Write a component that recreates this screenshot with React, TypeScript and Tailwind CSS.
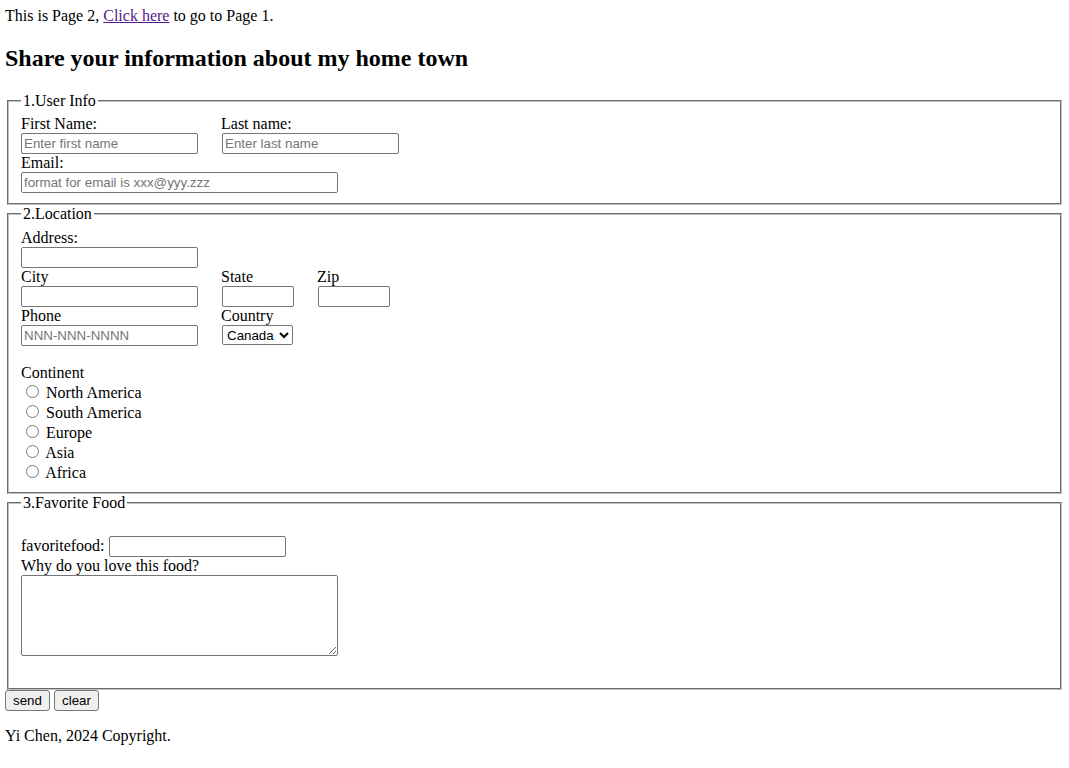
export default function App() {
  const inputCls =
    "block h-[21px] rounded-[2px] border border-[#767676] bg-white px-[2px] py-[1px] font-['Liberation_Sans',Arial,sans-serif] text-[13.333px] leading-[normal] text-black placeholder:text-[#757575] outline-none";
  const inlineInputCls =
    "inline-block h-[21px] rounded-[2px] border border-[#767676] bg-white px-[2px] py-[1px] font-['Liberation_Sans',Arial,sans-serif] text-[13.333px] leading-[normal] text-black placeholder:text-[#757575] outline-none";
  const fieldsetCls =
    "mx-[2px] min-w-min border-2 border-[#c0c0c0] [border-style:groove] px-[12px] pt-[5.6px] pb-[10px]";
  const legendCls = "px-[2px]";
  const radioCls = "m-[3px_3px_0_5px] h-[13px] w-[13px]";
  const continents = ["North America", "South America", "Europe", "Asia", "Africa"];
  const btnCls =
    "h-[21px] w-[45px] rounded-[3px] border border-[#767676] bg-[#efefef] px-[7px] py-[1px] font-['Liberation_Sans',Arial,sans-serif] text-[13.333px] leading-[normal] text-black";

  return (
    <div className="min-h-screen bg-white px-[5px] pt-[7px] font-['Liberation_Serif','Times_New_Roman',serif] text-[16px] leading-[normal] text-black">
      <div>
        This is Page 2,{" "}
        <a href="#" className="text-[#551a8b] underline">
          Click here
        </a>{" "}
        to go to Page 1.
      </div>
      <h2 className="my-[19.92px] text-[24px] font-bold leading-[normal]">
        Share your information about my home town
      </h2>
      <form onSubmit={(e) => e.preventDefault()}>
        <fieldset className={fieldsetCls}>
          <legend className={legendCls}>1.User Info</legend>
          <div className="flex">
            <div className="w-[200px]">
              <label className="block">First Name:</label>
              <input className={`${inputCls} w-[177px]`} placeholder="Enter first name" />
            </div>
            <div>
              <label className="block">Last name:</label>
              <input className={`${inputCls} ml-[1px] w-[177px]`} placeholder="Enter last name" />
            </div>
          </div>
          <label className="block">Email:</label>
          <input className={`${inputCls} w-[317px]`} placeholder="format for email is xxx@yyy.zzz" />
        </fieldset>

        <fieldset className={fieldsetCls}>
          <legend className={legendCls}>2.Location</legend>
          <label className="block">Address:</label>
          <input className={`${inputCls} w-[177px]`} />
          <div className="flex">
            <div className="w-[200px]">
              <label className="block">City</label>
              <input className={`${inputCls} w-[177px]`} />
            </div>
            <div className="w-[96px]">
              <label className="block">State</label>
              <input className={`${inputCls} ml-[1px] w-[72px]`} />
            </div>
            <div>
              <label className="block">Zip</label>
              <input className={`${inputCls} ml-[1px] w-[72px]`} />
            </div>
          </div>
          <div className="flex">
            <div className="w-[200px]">
              <label className="block">Phone</label>
              <input className={`${inputCls} w-[177px]`} placeholder="NNN-NNN-NNNN" />
            </div>
            <div>
              <label className="block">Country</label>
              <select
                defaultValue="Canada"
                className="ml-[1px] block h-[20px] w-[71px] rounded-[2px] border border-[#767676] bg-white font-['Liberation_Sans',Arial,sans-serif] text-[13.333px] text-black"
              >
                <option>Canada</option>
                <option>USA</option>
                <option>Mexico</option>
              </select>
            </div>
          </div>
          <div className="h-[18px]" />
          <div>Continent</div>
          {continents.map((c) => (
            <div key={c}>
              <input type="radio" name="continent" className={radioCls} /> {c}
            </div>
          ))}
        </fieldset>

        <fieldset className={fieldsetCls}>
          <legend className={legendCls}>3.Favorite Food</legend>
          <div className="h-[18px]" />
          <div>
            favoritefood: <input className={`${inlineInputCls} w-[177px]`} />
          </div>
          <label className="block">Why do you love this food?</label>
          <textarea className="block h-[81px] w-[317px] rounded-[2px] border border-[#767676] bg-white px-[2px] py-[2px] font-['Liberation_Mono',monospace] text-[13.333px]" />
          <div className="h-[22px]" />
        </fieldset>
        <div className="flex gap-[4px]">
          <button type="submit" className={btnCls}>
            send
          </button>
          <button type="reset" className={btnCls}>
            clear
          </button>
        </div>
      </form>
      <p className="my-[16px]">Yi Chen, 2024 Copyright.</p>
    </div>
  );
}
